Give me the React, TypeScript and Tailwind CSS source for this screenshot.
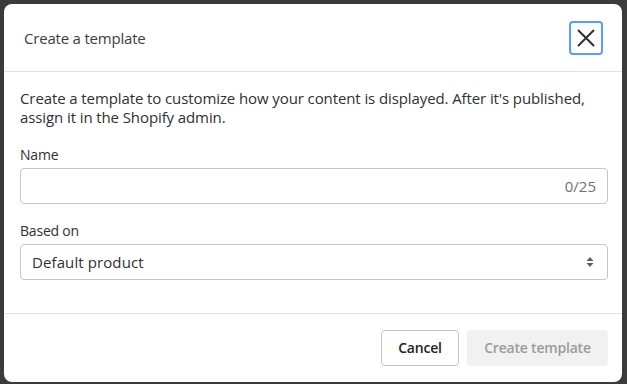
import React from "react";

export default function App() {
  return (
    <div
      className="w-[627px] h-[384px] bg-[#3b3b3b] p-[4px] pb-[2px] pr-[5px]"
      style={{ fontFamily: '"Open Sans", "Noto Sans", sans-serif' }}
    >
      <div className="h-full bg-white rounded-[8px] flex flex-col overflow-hidden">
        <div className="h-[68px] flex items-center justify-between pl-[20px] pr-[19px] border-b border-[#dfe3e8]">
          <div className="text-[15px] text-[#3d3d3d] tracking-[-0.2px] pt-[2px]">Create a template</div>
          <button className="w-[34px] h-[34px] rounded-[4px] border-2 border-[#5a9cf8] flex items-center justify-center">
            <svg width="20" height="20" viewBox="0 0 20 20">
              <path d="M2 2 L18 18 M18 2 L2 18" stroke="#303030" strokeWidth="2" />
            </svg>
          </button>
        </div>
        <div className="flex-1 pl-[16px] pr-[14px] pt-[17px] border-b border-[#dfe3e8]">
          <p className="text-[15px] leading-[19px] text-[#303030] tracking-[-0.1px]">
            Create a template to customize how your content is displayed. After it's published, assign it in the Shopify admin.
          </p>
          <div className="mt-[18px] text-[14px] leading-[20px] text-[#303030] tracking-[-0.2px]">Name</div>
          <div className="mt-[3px] h-[36px] rounded-[4px] border border-[#c4c6c8] flex items-center justify-end pr-[11px]">
            <span className="text-[15px] text-[#6d7175]">0/25</span>
          </div>
          <div className="mt-[17px] text-[14px] leading-[20px] text-[#303030] tracking-[-0.2px]">Based on</div>
          <div className="mt-[3px] h-[36px] rounded-[4px] border border-[#c4c6c8] flex items-center justify-between pl-[11px] pr-[13px]">
            <span className="text-[15px] text-[#303030] tracking-[0.1px]">Default product</span>
            <svg width="8" height="12" viewBox="0 0 8 12">
              <path d="M4 1 L7.5 5 L0.5 5 Z M4 11 L7.5 7 L0.5 7 Z" fill="#5c5f62" />
            </svg>
          </div>
        </div>
        <div className="h-[68px] flex items-center justify-end gap-[8px] pr-[14px] pb-[1px]">
          <button className="h-[36px] w-[78px] rounded-[4px] border border-[#c4c6c8] bg-white text-[14px] font-semibold text-[#202223] tracking-[-0.2px]">
            Cancel
          </button>
          <button className="h-[36px] w-[141px] rounded-[4px] bg-[#f1f1f1] text-[14px] font-semibold text-[#9a9b9c] tracking-[-0.2px]">
            Create template
          </button>
        </div>
      </div>
    </div>
  );
}
